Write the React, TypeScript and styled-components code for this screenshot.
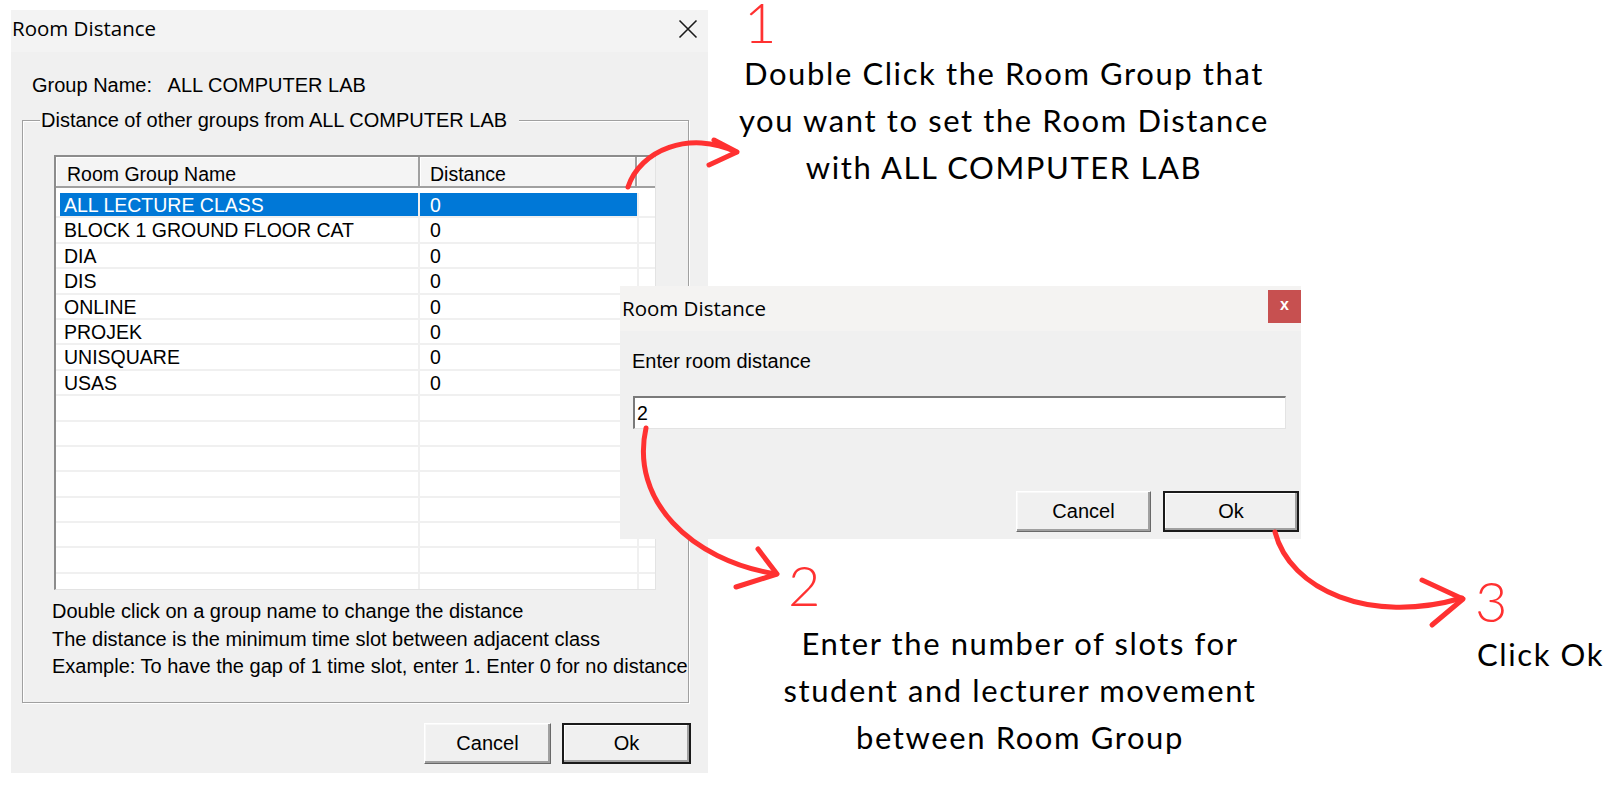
import React from "react";
import styled, { createGlobalStyle, css } from "styled-components";

const RED = "#ff3131";
const UI_FONT = `"Liberation Sans", Arial, sans-serif`;
const TITLE_FONT = `"Open Sans", "Noto Sans", sans-serif`;
const NOTE_FONT = `Lato, "Open Sans", sans-serif`;

const GlobalStyle = createGlobalStyle`
  html, body { margin: 0; padding: 0; background: #ffffff; }
  body { font-family: ${UI_FONT}; color: #000; }
  * { box-sizing: border-box; }
`;

const Canvas = styled.div`
  position: relative;
  width: 1612px;
  height: 788px;
  overflow: hidden;
  background: #fff;
`;

const Window = styled.section<{ $x: number; $y: number; $w: number; $h: number }>`
  position: absolute;
  left: ${(p) => p.$x}px;
  top: ${(p) => p.$y}px;
  width: ${(p) => p.$w}px;
  height: ${(p) => p.$h}px;
  background: #f0f0f0;
  display: flex;
  flex-direction: column;
  overflow: hidden;
`;

const TitleBar = styled.header<{ $h: number; $bg: string; $pl: number; $pb?: number }>`
  flex: none;
  height: ${(p) => p.$h}px;
  background: ${(p) => p.$bg};
  display: flex;
  align-items: center;
  justify-content: space-between;
  padding-left: ${(p) => p.$pl}px;
  padding-bottom: ${(p) => p.$pb ?? 0}px;
`;

const TitleText = styled.span`
  font-family: ${TITLE_FONT};
  font-size: 20.5px;
  line-height: 1;
  color: #000;
`;

const CloseIcon = styled.svg`
  width: 20px;
  height: 20px;
  margin-right: 10px;
  flex: none;
`;

const RedClose = styled.div`
  align-self: flex-start;
  margin-top: 4px;
  width: 33px;
  height: 33px;
  background: #c75050;
  color: #fff;
  font: bold 16px ${UI_FONT};
  display: flex;
  align-items: center;
  justify-content: center;
  padding-bottom: 3px;
`;

const MainBody = styled.div`
  flex: 1;
  display: flex;
  flex-direction: column;
  padding: 22px 17px 0 11px;
`;

const Label = styled.div<{ $indent?: number; $lh?: number }>`
  font-size: 20px;
  line-height: ${(p) => p.$lh ?? 22}px;
  padding-left: ${(p) => p.$indent ?? 0}px;
  white-space: pre;
`;

const GroupBox = styled.fieldset`
  margin: 13px 2px 0 0;
  padding: 0;
  min-width: 0;
  border: 1px solid #a0a0a0;
  box-shadow: inset 1px 1px 0 #fff, 1px 1px 0 #fff;
`;

const Legend = styled.legend`
  margin-left: 17px;
  padding: 0 12px 0 1px;
  font-size: 20px;
  line-height: 22px;
  background: #f0f0f0;
`;

const GroupContent = styled.div`
  display: flex;
  flex-direction: column;
  padding: 0 0 21px 29px;
`;

const ListView = styled.div`
  margin: 24px 0 0 2px;
  width: 602px;
  height: 435px;
  background: #fff;
  border-style: solid;
  border-width: 2px 1px 1px 2px;
  border-color: #8c8c8c #e3e3e3 #e3e3e3 #8c8c8c;
  display: flex;
  flex-direction: column;
  overflow: hidden;
`;

const HeaderRow = styled.div`
  flex: none;
  display: flex;
  height: 31px;
`;

const HeaderCell = styled.div<{ $w?: number; $pl: number; $last?: boolean }>`
  ${(p) => (p.$w ? `width: ${p.$w}px; flex: none;` : `flex: 1;`)}
  background: #f4f4f4;
  border-bottom: 2px solid #a0a0a0;
  border-right: ${(p) => (p.$last ? "0" : "2px solid #a0a0a0")};
  box-shadow: inset 1px 1px 0 #fff;
  padding-left: ${(p) => p.$pl}px;
  padding-top: 5px;
  font-size: 19.5px;
  display: flex;
  align-items: center;
  white-space: nowrap;
`;

const Rows = styled.div`
  flex: 1;
  padding-top: 5px;
  overflow: hidden;
`;

const Row = styled.div`
  display: flex;
  height: 25.4px;
  border-bottom: 2px solid #f0f0f0;
  padding-left: 4px;
`;

const Cell = styled.div<{ $w?: number; $pl: number; $sel?: boolean; $last?: boolean }>`
  ${(p) => (p.$w ? `width: ${p.$w}px; flex: none;` : `flex: 1;`)}
  border-right: ${(p) => (p.$last ? "0" : "2px solid #f0f0f0")};
  padding-left: ${(p) => p.$pl}px;
  padding-top: 1px;
  font-size: 19.5px;
  line-height: 23.4px;
  white-space: nowrap;
  ${(p) =>
    p.$sel &&
    css`
      background: #0078d7;
      color: #fff;
    `}
`;

const HelpText = styled.div`
  margin-top: 8px;
  font-size: 20px;
  line-height: 27.5px;
  white-space: pre;
`;

const ButtonRow = styled.div<{ $mt: number; $gap: number; $pr: number }>`
  display: flex;
  justify-content: flex-end;
  gap: ${(p) => p.$gap}px;
  margin-top: ${(p) => p.$mt}px;
  padding-right: ${(p) => p.$pr}px;
`;

const Button = styled.button<{ $w: number; $default?: boolean }>`
  width: ${(p) => p.$w}px;
  height: 41px;
  padding: 0;
  font: 20px ${UI_FONT};
  color: #000;
  background: #f0f0f0;
  ${(p) =>
    p.$default
      ? css`
          border: 2px solid #1a1a1a;
          box-shadow: inset -2px -2px 0 #a0a0a0, inset 1px 1px 0 #fff;
        `
      : css`
          border: 1px solid;
          border-color: #fff #696969 #696969 #fff;
          box-shadow: inset -2px -2px 0 #a0a0a0, inset 1px 1px 0 #f8f8f8;
        `}
`;

const PromptBody = styled.div`
  flex: 1;
  display: flex;
  flex-direction: column;
  padding: 19px 0 0 12px;
`;

const TextInput = styled.input`
  margin: 24px 0 0 1px;
  width: 653px;
  height: 33px;
  padding: 0 2px;
  background: #fff;
  border-style: solid;
  border-width: 2px 1px 1px 2px;
  border-color: #7a7a7a #e3e3e3 #e3e3e3 #7a7a7a;
  font: 19.5px ${UI_FONT};
  color: #000;
  outline: none;
`;

const Note = styled.p<{ $x: number; $y: number; $w: number; $align: "center" | "left" }>`
  position: absolute;
  margin: 0;
  left: ${(p) => p.$x}px;
  top: ${(p) => p.$y}px;
  width: ${(p) => p.$w}px;
  text-align: ${(p) => p.$align};
  font-family: ${NOTE_FONT};
  font-size: 31px;
  line-height: 47px;
  letter-spacing: 1.6px;
  color: #000;
  white-space: pre;
`;

const StepNumber = styled.span<{ $x: number; $y: number }>`
  position: absolute;
  left: ${(p) => p.$x}px;
  top: ${(p) => p.$y}px;
  font-family: ${NOTE_FONT};
  font-weight: 300;
  font-size: 56px;
  line-height: 42px;
  color: ${RED};
`;

const Overlay = styled.svg`
  position: absolute;
  left: 0;
  top: 0;
  width: 1612px;
  height: 788px;
  pointer-events: none;
`;

const rooms = [
  "ALL LECTURE CLASS",
  "BLOCK 1 GROUND FLOOR CAT",
  "DIA",
  "DIS",
  "ONLINE",
  "PROJEK",
  "UNISQUARE",
  "USAS",
];

const TOTAL_ROWS = 17;

export default function App() {
  const rows = Array.from({ length: TOTAL_ROWS }, (_, i) => rooms[i]);
  return (
    <Canvas>
      <GlobalStyle />

      <Window $x={11} $y={10} $w={697} $h={763}>
        <TitleBar $h={42} $bg="#f3f3f3" $pl={1} $pb={5}>
          <TitleText>Room Distance</TitleText>
          <CloseIcon viewBox="0 0 20 20">
            <path d="M1.5 1.5 L18.5 18.5 M18.5 1.5 L1.5 18.5" stroke="#1a1a1a" strokeWidth="1.6" fill="none" />
          </CloseIcon>
        </TitleBar>
        <MainBody>
          <Label $indent={10}>{"Group Name:   ALL COMPUTER LAB"}</Label>
          <GroupBox>
            <Legend>Distance of other groups from ALL COMPUTER LAB</Legend>
            <GroupContent>
              <ListView>
                <HeaderRow>
                  <HeaderCell $w={364} $pl={11}>Room Group Name</HeaderCell>
                  <HeaderCell $w={217} $pl={10}>Distance</HeaderCell>
                  <HeaderCell $pl={0} $last />
                </HeaderRow>
                <Rows>
                  {rows.map((name, i) => (
                    <Row key={i}>
                      <Cell $w={360} $pl={4} $sel={i === 0}>{name ?? ""}</Cell>
                      <Cell $w={219} $pl={10} $sel={i === 0}>{name ? "0" : ""}</Cell>
                      <Cell $pl={0} $last />
                    </Row>
                  ))}
                </Rows>
              </ListView>
              <HelpText>
                {"Double click on a group name to change the distance\nThe distance is the minimum time slot between adjacent class\nExample: To have the gap of 1 time slot, enter 1. Enter 0 for no distance"}
              </HelpText>
            </GroupContent>
          </GroupBox>
          <ButtonRow $mt={20} $gap={11} $pr={0}>
            <Button $w={127}>Cancel</Button>
            <Button $w={129} $default>Ok</Button>
          </ButtonRow>
        </MainBody>
      </Window>

      <Window $x={620} $y={286} $w={681} $h={253}>
        <TitleBar $h={45} $bg="#f4f3f2" $pl={2}>
          <TitleText>Room Distance</TitleText>
          <RedClose>x</RedClose>
        </TitleBar>
        <PromptBody>
          <Label>Enter room distance</Label>
          <TextInput defaultValue="2" readOnly />
          <ButtonRow $mt={62} $gap={12} $pr={2}>
            <Button $w={135}>Cancel</Button>
            <Button $w={136} $default>Ok</Button>
          </ButtonRow>
        </PromptBody>
      </Window>

      <StepNumber $x={744} $y={1}>1</StepNumber>
      <Note $x={704} $y={49.5} $w={600} $align="center">
        {"Double Click the Room Group that\nyou want to set the Room Distance\nwith ALL COMPUTER LAB"}
      </Note>

      <StepNumber $x={788} $y={564}>2</StepNumber>
      <Note $x={720} $y={620} $w={600} $align="center">
        {"Enter the number of slots for\nstudent and lecturer movement\nbetween Room Group"}
      </Note>

      <StepNumber $x={1475} $y={580}>3</StepNumber>
      <Note $x={1477} $y={630.5} $w={135} $align="left">Click Ok</Note>

      <Overlay viewBox="0 0 1612 788">
        <g stroke={RED} strokeWidth="5" fill="none" strokeLinecap="round" strokeLinejoin="round">
          <path d="M628 187 C640 150 690 130 736 152" />
          <path d="M714 140 L737 152 L709 165" />
          <path d="M646 428 C630 500 690 560 776 574" />
          <path d="M758 549 L777 574 L736 587" />
          <path d="M1275 532 C1290 590 1370 625 1462 598" />
          <path d="M1422 580 L1463 599 L1432 625" />
        </g>
      </Overlay>
    </Canvas>
  );
}
